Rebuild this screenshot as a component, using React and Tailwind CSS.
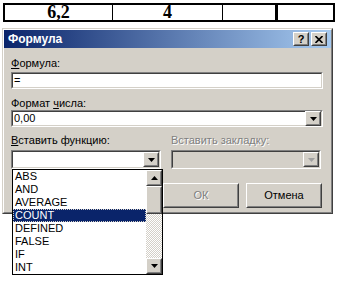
import React from "react";

const raisedOuter = "border border-t-white border-l-white border-r-[#404040] border-b-[#404040]";
const raisedInner = "border border-t-[#d4d0c8] border-l-[#d4d0c8] border-r-[#808080] border-b-[#808080]";
const sunkenOuter = "border border-t-[#808080] border-l-[#808080] border-r-white border-b-white";
const sunkenInner = "border border-t-[#404040] border-l-[#404040] border-r-[#d4d0c8] border-b-[#d4d0c8]";

function Arrow({ up = false, color = "#000" }) {
  return (
    <svg width="7" height="4" viewBox="0 0 7 4">
      <path d={up ? "M3.5 0 L7 4 L0 4 Z" : "M0 0 L7 0 L3.5 4 Z"} fill={color} />
    </svg>
  );
}

function ArrowButton({ up = false, disabled = false, className = "" }) {
  return (
    <div className={`${raisedOuter} bg-[#d4d0c8] ${className}`}>
      <div className={`${raisedInner} w-full h-full flex items-center justify-center`}>
        <Arrow up={up} color={disabled ? "#a0a0a0" : "#000"} />
      </div>
    </div>
  );
}

function Field({ value, dropdown = false, disabled = false, className = "" }) {
  return (
    <div className={`${sunkenOuter} ${className}`}>
      <div
        className={`${sunkenInner} h-full flex items-center ${
          disabled ? "bg-[#d4d0c8]" : "bg-white"
        }`}
      >
        <span className="flex-1 pl-[1px] leading-none">{value}</span>
        {dropdown && <ArrowButton disabled={disabled} className="w-[16px] h-[15px]" />}
      </div>
    </div>
  );
}

function Button({ children, disabled = false }) {
  return (
    <div className={`${raisedOuter} bg-[#d4d0c8] h-[25px]`}>
      <div className={`${raisedInner} h-full flex items-center justify-center`}>
        <span
          className={
            disabled ? "text-[#808080] [text-shadow:1px_1px_0_#fff]" : "text-black"
          }
        >
          {children}
        </span>
      </div>
    </div>
  );
}

const functions = ["ABS", "AND", "AVERAGE", "COUNT", "DEFINED", "FALSE", "IF", "INT"];

export default function App() {
  return (
    <div className="relative w-[341px] h-[284px] bg-white overflow-hidden font-['Liberation_Sans',Arial,sans-serif] text-[11px] text-black">
      <div className="ml-[3px] mt-[3px] w-[332px] h-[19px] flex border-2 border-black font-['Liberation_Serif','Times_New_Roman',serif] font-bold text-[18px] leading-[15px]">
        <div className="w-[108px] border-r border-black flex items-center justify-center">6,2</div>
        <div className="w-[110px] border-r border-black flex items-center justify-center">4</div>
        <div className="w-[55px] border-r-[3px] border-black"></div>
        <div className="flex-1"></div>
      </div>

      <div className="ml-[2px] mt-[6px] w-[331px] h-[186px] bg-[#d4d0c8] border border-t-[#d4d0c8] border-l-[#d4d0c8] border-r-[#404040] border-b-[#404040]">
        <div className="h-full border border-t-white border-l-white border-r-[#808080] border-b-[#808080]">
          <div className="h-[18px] flex items-center pl-[4px] pr-[4px] bg-[linear-gradient(to_right,#0a246a,#a6caf0)]">
            <span className="flex-1 text-white font-bold text-[12px]">Формула</span>
            <div className={`${raisedOuter} bg-[#d4d0c8] w-[16px] h-[14px]`}>
              <div className={`${raisedInner} h-full flex items-center justify-center font-bold text-[11px] leading-none`}>
                ?
              </div>
            </div>
            <div className={`${raisedOuter} bg-[#d4d0c8] w-[16px] h-[14px] ml-[2px]`}>
              <div className={`${raisedInner} h-full flex items-center justify-center`}>
                <svg width="8" height="7" viewBox="0 0 8 7">
                  <path d="M0.5 0 L7.5 7 M7.5 0 L0.5 7" stroke="#000" strokeWidth="1.6" />
                </svg>
              </div>
            </div>
          </div>

          <div className="pl-[7px] pr-[8px]">
            <div className="mt-[9px] h-[13px] leading-[13px]">
              <span className="underline">Ф</span>ормула:
            </div>
            <Field value="=" className="mt-[2px] h-[17px]" />

            <div className="mt-[8px] h-[13px] leading-[13px]">
              Формат <span className="underline">ч</span>исла:
            </div>
            <Field value="0,00" dropdown className="h-[17px]" />

            <div className="mt-[7px] h-[13px] leading-[13px] flex">
              <span className="w-[160px]">
                <span className="underline">В</span>ставить функцию:
              </span>
              <span className="text-[#808080] [text-shadow:1px_1px_0_#fff]">Вставить закладку:</span>
            </div>
            <div className="mt-[3px] flex gap-[10px]">
              <Field value="" dropdown className="w-[150px] h-[19px]" />
              <Field value="" dropdown disabled className="w-[150px] h-[19px]" />
            </div>

            <div className="mt-[14px] flex gap-[7px] pl-[152px]">
              <div className="w-[76px]">
                <Button disabled>ОК</Button>
              </div>
              <div className="w-[76px]">
                <Button>Отмена</Button>
              </div>
            </div>
          </div>
        </div>
      </div>

      <div className="absolute left-[12px] top-[169px] w-[151px] h-[106px] border border-black bg-white flex">
        <div className="flex-1 flex flex-col">
          {functions.map((name) => (
            <div
              key={name}
              className={`h-[13px] leading-[13px] pl-[2px] ${
                name === "COUNT"
                  ? "bg-[#0a246a] text-white outline outline-1 outline-dotted outline-[#d4d0c8] -outline-offset-1"
                  : ""
              }`}
            >
              {name}
            </div>
          ))}
        </div>
        <div className="w-[16px] flex flex-col">
          <ArrowButton up className="h-[16px]" />
          <div className={`${raisedOuter} bg-[#d4d0c8] h-[28px]`}>
            <div className={`${raisedInner} h-full`}></div>
          </div>
          <div className="flex-1 bg-[repeating-conic-gradient(#d4d0c8_0_25%,#ffffff_0_50%)] bg-[length:2px_2px]"></div>
          <ArrowButton className="h-[16px]" />
        </div>
      </div>
    </div>
  );
}
